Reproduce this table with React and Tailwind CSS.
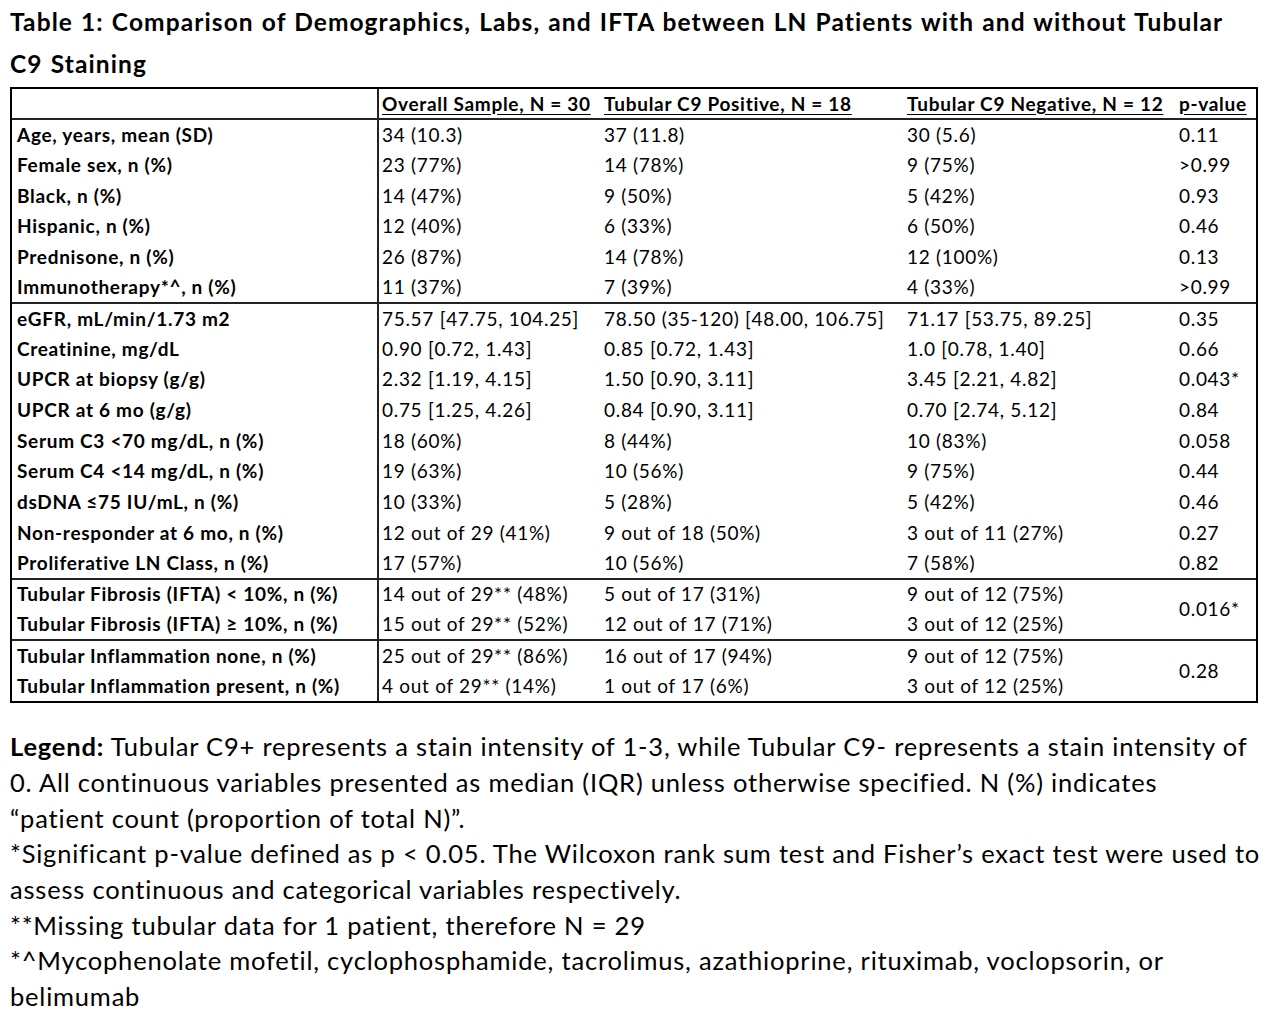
import React from "react";

const sec1 = [
  ["Age, years, mean (SD)", "34 (10.3)", "37 (11.8)", "30 (5.6)", "0.11"],
  ["Female sex, n (%)", "23 (77%)", "14 (78%)", "9 (75%)", ">0.99"],
  ["Black, n (%)", "14 (47%)", "9 (50%)", "5 (42%)", "0.93"],
  ["Hispanic, n (%)", "12 (40%)", "6 (33%)", "6 (50%)", "0.46"],
  ["Prednisone, n (%)", "26 (87%)", "14 (78%)", "12 (100%)", "0.13"],
  ["Immunotherapy*^, n (%)", "11 (37%)", "7 (39%)", "4 (33%)", ">0.99"],
];
const sec2 = [
  ["eGFR, mL/min/1.73 m2", "75.57 [47.75, 104.25]", "78.50 (35-120) [48.00, 106.75]", "71.17 [53.75, 89.25]", "0.35"],
  ["Creatinine, mg/dL", "0.90 [0.72, 1.43]", "0.85 [0.72, 1.43]", "1.0 [0.78, 1.40]", "0.66"],
  ["UPCR at biopsy (g/g)", "2.32 [1.19, 4.15]", "1.50 [0.90, 3.11]", "3.45 [2.21, 4.82]", "0.043*"],
  ["UPCR at 6 mo (g/g)", "0.75 [1.25, 4.26]", "0.84 [0.90, 3.11]", "0.70 [2.74, 5.12]", "0.84"],
  ["Serum C3 <70 mg/dL, n (%)", "18 (60%)", "8 (44%)", "10 (83%)", "0.058"],
  ["Serum C4 <14 mg/dL, n (%)", "19 (63%)", "10 (56%)", "9 (75%)", "0.44"],
  ["dsDNA \u226475 IU/mL, n (%)", "10 (33%)", "5 (28%)", "5 (42%)", "0.46"],
  ["Non-responder at 6 mo, n (%)", "12 out of 29 (41%)", "9 out of 18 (50%)", "3 out of 11 (27%)", "0.27"],
  ["Proliferative LN Class, n (%)", "17 (57%)", "10 (56%)", "7 (58%)", "0.82"],
];
const sec3 = [
  ["Tubular Fibrosis (IFTA) < 10%, n (%)", "14 out of 29** (48%)", "5 out of 17 (31%)", "9 out of 12 (75%)"],
  ["Tubular Fibrosis (IFTA) \u2265 10%, n (%)", "15 out of 29** (52%)", "12 out of 17 (71%)", "3 out of 12 (25%)"],
];
const sec4 = [
  ["Tubular Inflammation none, n (%)", "25 out of 29** (86%)", "16 out of 17 (94%)", "9 out of 12 (75%)"],
  ["Tubular Inflammation present, n (%)", "4 out of 29** (14%)", "1 out of 17 (6%)", "3 out of 12 (25%)"],
];

function Row({ r, topBorder, pval, span }) {
  return (
    <tr className={topBorder ? "border-t-2 border-[#222]" : ""}>
      <td className="h-[30.65px] pl-[5px] font-bold border-r-2 border-[#222] whitespace-nowrap">{r[0]}</td>
      <td className="pl-[3px] whitespace-nowrap">{r[1]}</td>
      <td className="whitespace-nowrap">{r[2]}</td>
      <td className="whitespace-nowrap">{r[3]}</td>
      {pval !== undefined && (
        <td rowSpan={span || 1} className="whitespace-nowrap align-middle">{pval}</td>
      )}
    </tr>
  );
}

export default function App() {
  return (
    <div className="w-[1272px] h-[1024px] bg-white text-black font-['Lato',sans-serif] overflow-hidden">
      <div className="pl-[10px] pt-[1px] text-[24.5px] font-bold leading-[42px] tracking-[1.1px] [word-spacing:1px]">
        Table 1: Comparison of Demographics, Labs, and IFTA between LN Patients with and without Tubular
        <br />
        C9 Staining
      </div>
      <div className="ml-[10px] mt-[2px] w-[1248px] border-[2.5px] border-black">
        <table className="w-full border-collapse table-fixed text-[19px] leading-[22px] tracking-[0.7px]">
          <colgroup>
            <col className="w-[366px]" />
            <col className="w-[226px]" />
            <col className="w-[303px]" />
            <col className="w-[272px]" />
            <col />
          </colgroup>
          <thead>
            <tr>
              <th className="h-[30px] border-r-2 border-[#222]"></th>
              <th className="text-left font-bold pl-[3px] whitespace-nowrap"><span className="underline underline-offset-[3px]">Overall Sample, N = 30</span></th>
              <th className="text-left font-bold whitespace-nowrap"><span className="underline underline-offset-[3px]">Tubular C9 Positive, N = 18</span></th>
              <th className="text-left font-bold whitespace-nowrap"><span className="underline underline-offset-[3px]">Tubular C9 Negative, N = 12</span></th>
              <th className="text-left font-bold whitespace-nowrap"><span className="underline underline-offset-[3px]">p-value</span></th>
            </tr>
          </thead>
          <tbody>
            {sec1.map((r, i) => (
              <Row key={"a" + i} r={r} topBorder={i === 0} pval={r[4]} />
            ))}
            {sec2.map((r, i) => (
              <Row key={"b" + i} r={r} topBorder={i === 0} pval={r[4]} />
            ))}
            {sec3.map((r, i) => (
              <Row key={"c" + i} r={r} topBorder={i === 0} pval={i === 0 ? "0.016*" : undefined} span={2} />
            ))}
            {sec4.map((r, i) => (
              <Row key={"d" + i} r={r} topBorder={i === 0} pval={i === 0 ? "0.28" : undefined} span={2} />
            ))}
          </tbody>
        </table>
      </div>
      <div className="pl-[10px] pt-[26px] text-[25.5px] leading-[35.7px] tracking-[0.8px]">
        <span className="font-bold">Legend:</span> Tubular C9+ represents a stain intensity of 1-3, while Tubular C9- represents a stain intensity of
        <br />
        0. All continuous variables presented as median (IQR) unless otherwise specified. N (%) indicates
        <br />
        {"\u201Cpatient count (proportion of total N)\u201D."}
        <br />
        *Significant p-value defined as p &lt; 0.05. The Wilcoxon rank sum test and Fisher{"\u2019"}s exact test were used to
        <br />
        assess continuous and categorical variables respectively.
        <br />
        **Missing tubular data for 1 patient, therefore N = 29
        <br />
        *^Mycophenolate mofetil, cyclophosphamide, tacrolimus, azathioprine, rituximab, voclopsorin, or
        <br />
        belimumab
      </div>
    </div>
  );
}
